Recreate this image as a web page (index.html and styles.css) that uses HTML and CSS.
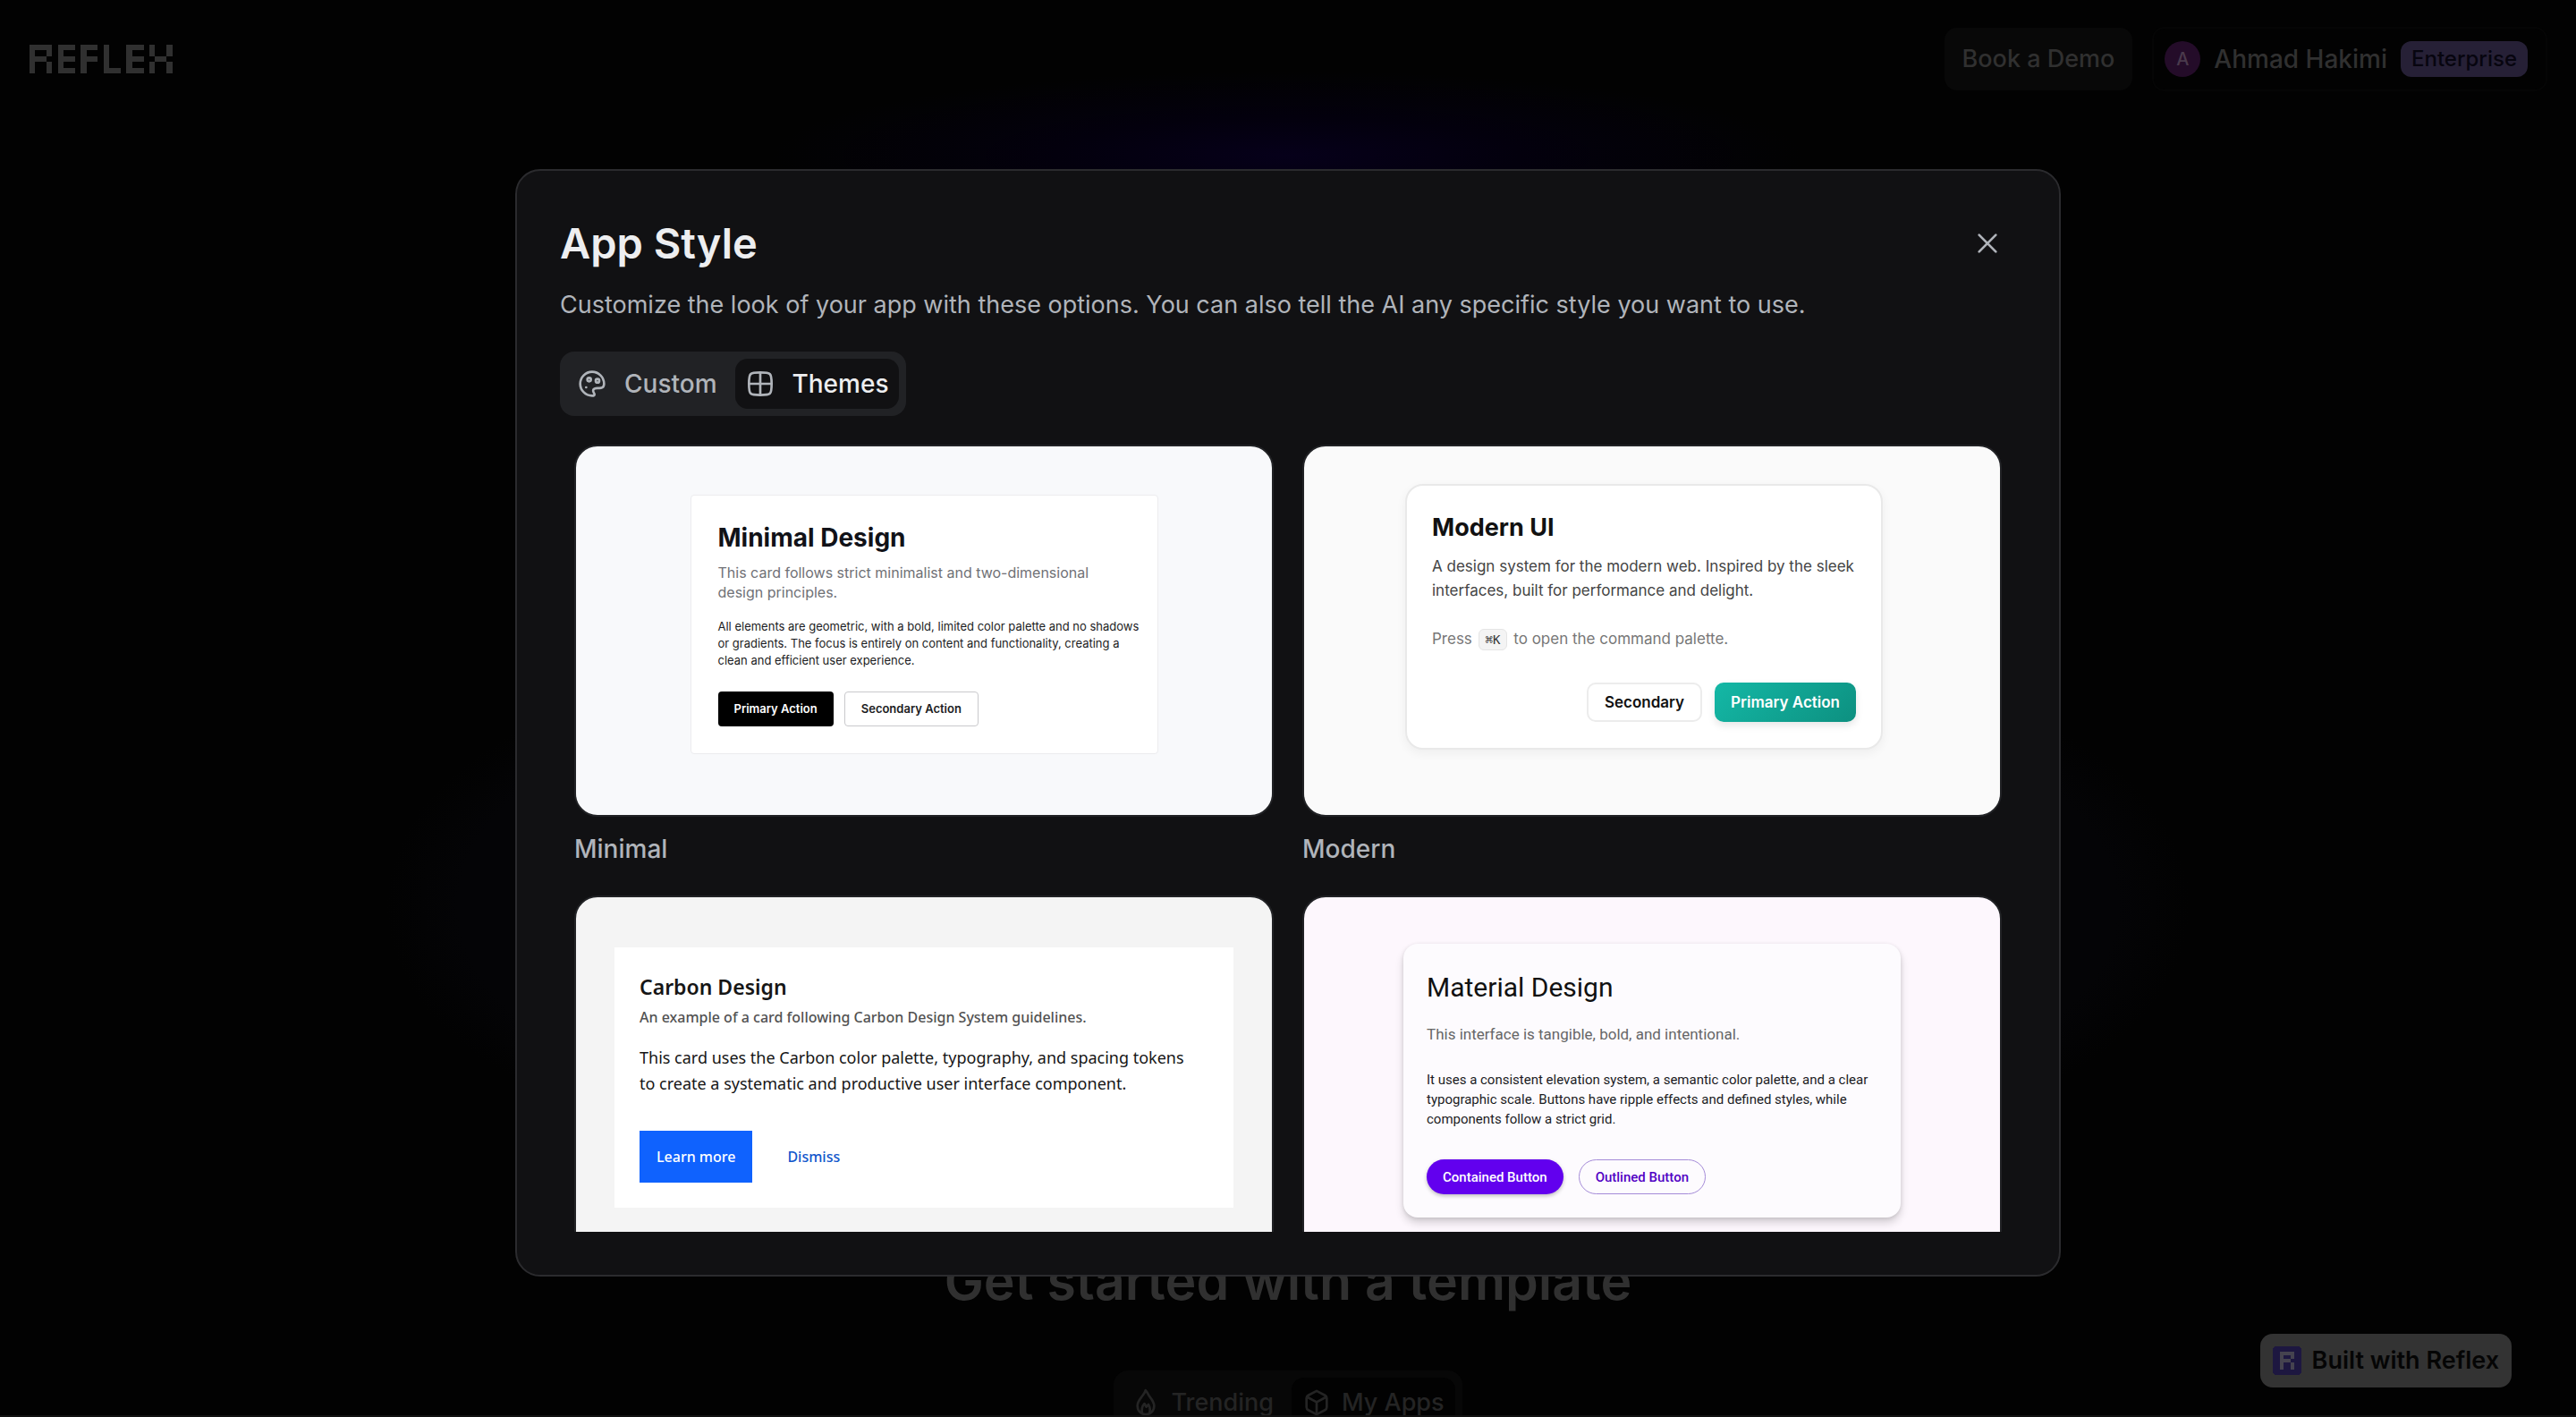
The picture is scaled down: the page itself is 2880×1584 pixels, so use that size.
FILE: index.html
```html
<!DOCTYPE html>
<html lang="en">
<head>
<meta charset="utf-8">
<title>Reflex Build – App Style</title>
<link rel="stylesheet" href="styles.css">
</head>
<body>
<div class="page">
  <header class="topbar">
    <a class="brand" href="#" aria-label="Reflex">
      <svg class="brand-mark" viewBox="0 0 25 5" fill="currentColor" shape-rendering="crispEdges">
        <rect x="0" y="0" width="1" height="5"/><rect x="1" y="0" width="3" height="1"/><rect x="3" y="1" width="1" height="1"/><rect x="1" y="2" width="2" height="1"/><rect x="3" y="3" width="1" height="2"/>
        <rect x="5" y="0" width="1" height="5"/><rect x="6" y="0" width="2" height="1"/><rect x="6" y="2" width="2" height="1"/><rect x="6" y="4" width="2" height="1"/>
        <rect x="9" y="0" width="1" height="5"/><rect x="10" y="0" width="2" height="1"/><rect x="10" y="2" width="2" height="1"/>
        <rect x="13" y="0" width="1" height="5"/><rect x="14" y="4" width="2" height="1"/>
        <rect x="17" y="0" width="1" height="5"/><rect x="18" y="0" width="2" height="1"/><rect x="18" y="2" width="2" height="1"/><rect x="18" y="4" width="2" height="1"/>
        <rect x="21" y="0" width="1" height="2"/><rect x="24" y="0" width="1" height="2"/><rect x="22" y="2" width="2" height="1"/><rect x="21" y="3" width="1" height="2"/><rect x="24" y="3" width="1" height="2"/>
      </svg>
    </a>
    <div class="topbar-actions">
      <button class="demo-button" type="button">Book a Demo</button>
      <button class="account" type="button">
        <span class="avatar">A</span>
        <span class="account-name">Ahmad Hakimi</span>
        <span class="plan">Enterprise</span>
      </button>
    </div>
  </header>

  <main class="home">
    <h1 class="home-title">Get started with a template</h1>
    <div class="segmented segmented-dim">
      <button class="segment" type="button">
        <svg class="icon" viewBox="0 0 24 24"><path d="M12 21.800C8 21.800 5 18.800 5 14.600C5 11 7.500 8.600 9.200 6.200C10.400 4.600 11.400 3.400 11.800 1.600C13.200 3.200 14.200 5 15 6.600C17.200 9.400 19 11.600 19 14.600C19 18.800 16 21.800 12 21.800Z"/><path d="M9 21C8.200 17.500 9 14.800 10.800 12.800L12.500 15.500L14.200 13.500C15.600 15.800 15.900 18.300 15 21"/></svg>
        Trending
      </button>
      <button class="segment segment-on" type="button">
        <svg class="icon" viewBox="0 0 24 24"><path d="M12 2.200L19 5.800Q20.500 6.600 20.500 8.200V15.800Q20.500 17.400 19 18.200L12 21.800L5 18.200Q3.500 17.400 3.500 15.800V8.200Q3.500 6.600 5 5.800Z"/><path d="M4.500 7.500L12 11.500L19.500 7.500M12 11.500V21"/></svg>
        My Apps
      </button>
    </div>
  </main>

  <a class="built-with" href="#">
    <svg class="built-icon" viewBox="0 0 32 32" shape-rendering="crispEdges">
      <rect width="32" height="32" rx="4" fill="#1d1740"/>
      <g fill="#45434f"><rect x="8" y="6" width="4" height="20"/><rect x="12" y="6" width="12" height="4"/><rect x="20" y="10" width="4" height="4"/><rect x="12" y="14" width="8" height="4"/><rect x="20" y="18" width="4" height="8"/></g>
    </svg>
    Built with Reflex
  </a>
</div>

<div class="overlay">
  <section class="dialog" role="dialog" aria-labelledby="dialog-title">
    <div class="dialog-head">
      <h2 class="dialog-title" id="dialog-title">App Style</h2>
      <button class="close" type="button" aria-label="Close">
        <svg class="icon" viewBox="0 0 24 24"><path d="M5 5L19 19M19 5L5 19"/></svg>
      </button>
    </div>
    <p class="dialog-text">Customize the look of your app with these options. You can also tell the AI any specific style you want to use.</p>
    <div class="segmented">
      <button class="segment" type="button">
        <svg class="icon" viewBox="0 0 24 24"><path d="M22 12C22 6.477 17.523 2 12 2C6.477 2 2 6.477 2 12C2 17.523 6.477 22 12 22C12.842 22 14 22.116 14 21C14 20.391 13.683 19.921 13.369 19.454C12.908 18.772 12.452 18.095 13 17C13.667 15.667 14.778 15.667 16.482 15.667C17.333 15.667 18.333 15.667 19.500 15.500C21.601 15.200 22 13.908 22 12Z"/><path d="M7 15H7.010"/><circle cx="9.500" cy="8.500" r="1.500"/><circle cx="16.500" cy="9.500" r="1.500"/></svg>
        Custom
      </button>
      <button class="segment segment-on" type="button">
        <svg class="icon" viewBox="0 0 24 24"><path d="M2.500 12C2.500 7.522 2.500 5.282 3.891 3.891C5.282 2.500 7.522 2.500 12 2.500C16.478 2.500 18.718 2.500 20.109 3.891C21.500 5.282 21.500 7.522 21.500 12C21.500 16.478 21.500 18.718 20.109 20.109C18.718 21.500 16.478 21.500 12 21.500C7.522 21.500 5.282 21.500 3.891 20.109C2.500 18.718 2.500 16.478 2.500 12Z"/><path d="M12 2.500V21.500M2.500 12H21.500"/></svg>
        Themes
      </button>
    </div>

    <div class="themes">
      <article class="theme">
        <div class="preview preview-minimal">
          <div class="card minimal">
            <h3>Minimal Design</h3>
            <p class="lead">This card follows strict minimalist and two-dimensional design principles.</p>
            <p class="body">All elements are geometric, with a bold, limited color palette and no shadows or gradients. The focus is entirely on content and functionality, creating a clean and efficient user experience.</p>
            <div class="actions"><button class="solid" type="button">Primary Action</button><button class="outline" type="button">Secondary Action</button></div>
          </div>
        </div>
        <h3 class="theme-name">Minimal</h3>
      </article>
      <article class="theme">
        <div class="preview preview-modern">
          <div class="card modern">
            <h3>Modern UI</h3>
            <p class="lead">A design system for the modern web. Inspired by the sleek interfaces, built for performance and delight.</p>
            <p class="hint">Press <kbd>⌘K</kbd> to open the command palette.</p>
            <div class="actions"><button class="outline" type="button">Secondary</button><button class="solid" type="button">Primary Action</button></div>
          </div>
        </div>
        <h3 class="theme-name">Modern</h3>
      </article>
      <article class="theme">
        <div class="preview preview-carbon">
          <div class="card carbon">
            <h3>Carbon Design</h3>
            <p class="lead">An example of a card following Carbon Design System guidelines.</p>
            <p class="body">This card uses the Carbon color palette, typography, and spacing tokens to create a systematic and productive user interface component.</p>
            <div class="actions"><button class="solid" type="button">Learn more</button><button class="ghost" type="button">Dismiss</button></div>
          </div>
        </div>
      </article>
      <article class="theme">
        <div class="preview preview-material">
          <div class="card material">
            <h3>Material Design</h3>
            <p class="lead">This interface is tangible, bold, and intentional.</p>
            <p class="body">It uses a consistent elevation system, a semantic color palette, and a clear typographic scale. Buttons have ripple effects and defined styles, while components follow a strict grid.</p>
            <div class="actions"><button class="solid" type="button">Contained Button</button><button class="outline" type="button">Outlined Button</button></div>
          </div>
        </div>
      </article>
    </div>
  </section>
</div>
</body>
</html>
```
FILE: styles.css
```css
* { box-sizing: border-box; }

body {
  margin: 0;
  background: #020202;
  color: #303030;
  font-family: Inter, "Liberation Sans", sans-serif;
  font-size: 28px;
  font-weight: 500;
  line-height: 40px;
}

h1, h2, h3, p { margin: 0; }

button {
  margin: 0;
  padding: 0;
  border: 0;
  background: none;
  color: inherit;
  font: inherit;
  white-space: nowrap;
}

a { color: inherit; text-decoration: none; }

.icon {
  display: block;
  width: 32px;
  height: 32px;
  flex: none;
  fill: none;
  stroke: currentColor;
  stroke-width: 2;
  stroke-linecap: round;
  stroke-linejoin: round;
}

/* Page behind the dialog */
.page {
  position: relative;
  display: flex;
  flex-direction: column;
  height: 100vh;
  overflow: hidden;
  background:
    radial-gradient(ellipse 20% 6% at 50% 11%, #06001a, #03000d 45%, transparent),
    radial-gradient(ellipse 14% 16% at 29% 64%, #040406 80%, transparent),
    radial-gradient(ellipse 14% 16% at 71% 64%, #040406 80%, transparent),
    #020202;
  border-bottom: 2px solid #121212;
}

.topbar {
  display: flex;
  align-items: center;
  justify-content: space-between;
  padding: 30px 32px 0;
}

.brand-mark { display: block; width: 161px; height: 32px; }

.topbar-actions { display: flex; align-items: center; gap: 22px; }

.demo-button {
  padding: 15px 20px;
  border-radius: 14px;
  background: #080808;
  font-size: 27px;
}

.account {
  display: flex;
  align-items: center;
  gap: 15px;
  padding: 14px 20px 14px 12px;
  border: 2px solid #050505;
  border-radius: 14px;
}

.avatar {
  width: 40px;
  border-radius: 50%;
  background: #240c29;
  color: #4a3a4c;
  font-size: 20px;
  text-align: center;
}

.plan {
  padding: 0 12px;
  border-radius: 12px;
  background: #262036;
  color: #07050f;
  font-size: 24px;
}

.home {
  display: flex;
  flex-direction: column;
  align-items: center;
  gap: 64px;
  margin-top: auto;
  margin-bottom: -22px;
}

.home-title {
  color: #303030;
  font-size: 59px;
  font-weight: 600;
  line-height: 72px;
}

.built-with {
  position: absolute;
  right: 72px;
  bottom: 31px;
  display: flex;
  align-items: center;
  gap: 12px;
  padding: 10px 14px;
  border-radius: 14px;
  background: #333;
  color: #050505;
  font-size: 27px;
  font-weight: 600;
}

.built-icon { width: 32px; height: 32px; }

/* Segmented control */
.segmented {
  display: flex;
  align-self: flex-start;
  gap: 8px;
  padding: 8px;
  border-radius: 16px;
  background: #212225;
  color: #b0b4ba;
}

.segment {
  display: flex;
  align-items: center;
  gap: 20px;
  padding: 8px 12px;
  border-radius: 14px;
}

.segment-on { background: #111113; color: #edeef0; }
.segment-on .icon { color: #b0b4ba; }

.segmented-dim { align-self: center; background: #070707; color: #242424; font-size: 27px; }
.segmented-dim .segment { gap: 12px; }
.segmented-dim .segment-on { background: #020202; color: #242424; }
.segmented-dim .segment-on .icon { color: #242424; }

/* Dialog */
.overlay {
  position: fixed;
  inset: 0;
  display: flex;
  justify-content: center;
  padding: 189px 0 157px;
}

.dialog {
  display: flex;
  flex-direction: column;
  width: 60%;
  padding: 48px;
  border: 2px solid #2b2b2e;
  border-radius: 28px;
  background: #111113;
  color: #b0b4ba;
}

.dialog-head {
  display: flex;
  align-items: center;
  justify-content: space-between;
  padding-right: 16px;
}

.dialog-title {
  color: #edeef0;
  font-size: 47px;
  font-weight: 600;
  line-height: 66px;
}

.dialog-text { margin: 16px 0 32px; font-size: 27px; font-weight: 400; }

.themes {
  display: grid;
  grid-template-columns: 1fr 1fr;
  gap: 32px;
  min-height: 0;
  flex: 1;
  align-content: start;
  margin-top: 32px;
  padding: 0 16px;
  overflow: hidden;
}

.theme { display: flex; flex-direction: column; gap: 16px; }

.theme-name { font-size: inherit; font-weight: 500; }

.preview {
  display: flex;
  align-items: flex-start;
  justify-content: center;
  height: 416px;
  border: 2px solid #212225;
  border-radius: 26px;
}

.card { text-align: left; }
.card .actions { display: flex; }
.card .solid { color: #fff; }

/* Minimal */
.preview-minimal { padding-top: 54px; background: #f8f9fb; }

.minimal {
  width: 523px;
  padding: 30px 20px 30px 30px;
  border: 1px solid #ececee;
  border-radius: 4px;
  background: #fff;
  color: #1b1c22;
  font-size: 13px;
  font-weight: 400;
  line-height: 19px;
}

.minimal h3 { color: #111218; font-size: 28px; font-weight: 700; line-height: 34px; }
.minimal .lead { margin: 11px 0 18px; padding-right: 30px; color: #707176; font-size: 16px; line-height: 22px; }
.minimal .actions { gap: 12px; margin-top: 25px; font-weight: 600; }
.minimal button { height: 39px; padding: 0 18px; border-radius: 4px; }
.minimal .solid { background: #000; }
.minimal .outline { border: 1px solid #c9c9cc; }

/* Modern */
.preview-modern { justify-content: flex-start; padding: 42px 0 0 113px; background: #fafafa; }

.modern {
  width: 534px;
  padding: 29px 28px;
  border: 2px solid #e9e9e9;
  border-radius: 20px;
  background: #fff;
  box-shadow: 0 4px 12px rgba(0, 0, 0, 0.050);
  color: #444;
  font-size: 17px;
  font-weight: 400;
  line-height: 27px;
}

.modern h3 { color: #111; font-size: 27px; font-weight: 700; line-height: 36px; }
.modern .lead { margin-top: 12px; }
.modern .hint { margin-top: 27px; color: #777; }

.modern kbd {
  display: inline-block;
  margin: 0 2px;
  padding: 0 7px;
  border: 1px solid #e5e5e5;
  border-radius: 6px;
  background: #f4f4f4;
  color: #333;
  font-family: "DejaVu Sans Mono", monospace;
  font-size: 14px;
  line-height: 22px;
}

.modern .actions { justify-content: flex-end; gap: 14px; margin-top: 35px; font-weight: 600; }
.modern button { height: 44px; padding: 0 18px; border-radius: 10px; }
.modern .outline { border: 2px solid #ececec; color: #111; }
.modern .solid { background: linear-gradient(135deg, #14b8a6, #0d9080); box-shadow: 0 4px 8px rgba(0, 0, 0, 0.100); }

/* Carbon */
.preview-carbon { padding-top: 56px; background: #f4f4f4; }

.carbon {
  width: 692px;
  padding: 28px 40px 28px 28px;
  background: #fff;
  color: #161616;
  font-family: "Noto Sans", "Open Sans", sans-serif;
  font-size: 18px;
  font-weight: 400;
  line-height: 29px;
}

.carbon h3 { margin-bottom: 4px; font-size: 23px; font-weight: 600; line-height: 32px; }
.carbon .lead { margin-bottom: 16px; color: #525252; font-size: 16px; font-weight: 500; }
.carbon .actions { gap: 20px; margin-top: 38px; font-size: 16px; font-weight: 500; }
.carbon button { height: 58px; padding: 0 19px; }
.carbon .solid { background: #0f62fe; }
.carbon .ghost { color: #1257cc; }

/* Material */
.preview-material { padding-top: 52px; background: #fdf7fd; }

.material {
  width: 556px;
  padding: 26px;
  border-radius: 16px;
  background: #fdfbfe;
  box-shadow: 0 6px 10px rgba(0, 0, 0, 0.160), 0 1px 4px rgba(0, 0, 0, 0.100);
  color: #1b1b1f;
  font-family: Roboto, sans-serif;
  font-size: 15px;
  font-weight: 400;
  line-height: 22px;
}

.material h3 { color: #111; font-size: 30px; font-weight: 400; line-height: 46px; }
.material .lead { margin: 18px 0 29px; color: #666; font-size: 17px; }
.material .actions { gap: 17px; margin-top: 34px; font-weight: 500; }
.material button { height: 39px; padding: 0 18px; border-radius: 20px; }
.material .solid { background: #6200ee; box-shadow: 0 2px 4px rgba(0, 0, 0, 0.250); }
.material .outline { border: 1px solid #a58bd8; color: #5200c4; }
```
